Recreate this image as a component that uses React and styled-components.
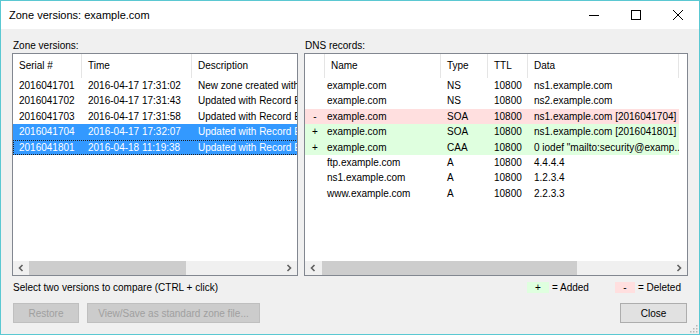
import styled, { createGlobalStyle } from "styled-components";

const GlobalStyle = createGlobalStyle`
  html, body {
    margin: 0;
    padding: 0;
    background: #f0f0f0;
  }
  body {
    font-family: "Liberation Sans", Arial, sans-serif;
    font-size: 10px;
    color: #000;
  }
`;

const Window = styled.div`
  position: relative;
  width: 700px;
  height: 335px;
  box-sizing: border-box;
  border: 1px solid #5bc8d2;
  background: #f0f0f0;
  display: flex;
  flex-direction: column;
`;

const TitleBar = styled.div`
  height: 28px;
  flex: none;
  background: #fff;
  display: flex;
  align-items: center;
`;

const Title = styled.div`
  flex: 1;
  padding-left: 8px;
  font-size: 11px;
`;

const CaptionButton = styled.div`
  width: 42px;
  height: 28px;
  display: flex;
  align-items: center;
  justify-content: center;
`;

const Content = styled.div`
  flex: 1;
  padding: 10px 11px 0 11px;
  display: flex;
  flex-direction: column;
`;

const Panels = styled.div`
  display: grid;
  grid-template-columns: 286px 384px;
  column-gap: 6px;
`;

const Panel = styled.div`
  display: flex;
  flex-direction: column;
`;

const Label = styled.div`
  height: 14px;
  line-height: 14px;
  padding-left: 1px;
`;

const ListBox = styled.div`
  height: 223px;
  box-sizing: border-box;
  border: 1px solid #828790;
  background: #fff;
  display: flex;
  flex-direction: column;
  overflow: hidden;
`;

const Header = styled.div`
  height: 24px;
  flex: none;
  display: flex;
  width: max-content;
`;

const HeaderCell = styled.div`
  width: ${(p) => p.$w}px;
  box-sizing: border-box;
  padding-left: ${(p) => p.$pad ?? 6}px;
  line-height: 24px;
  border-right: 1px solid #e5e5e5;
  white-space: nowrap;
  overflow: hidden;
`;

const Rows = styled.div`
  flex: 1;
  overflow: hidden;
`;

const Row = styled.div`
  display: flex;
  width: max-content;
  height: 15.4px;
  box-sizing: border-box;
  background: ${(p) => p.$bg || "transparent"};
  color: ${(p) => (p.$selected ? "#fff" : "#000")};
  outline: ${(p) => (p.$focus ? "1px dotted #222" : "none")};
  outline-offset: -1px;
`;

const Cell = styled.div`
  width: ${(p) => p.$w}px;
  box-sizing: border-box;
  padding-left: ${(p) => p.$pad ?? 6}px;
  text-align: ${(p) => p.$align || "left"};
  line-height: 15.4px;
  white-space: nowrap;
  overflow: hidden;
`;

const HScroll = styled.div`
  height: 14px;
  flex: none;
  display: flex;
  background: #f0f0f0;
`;

const ScrollArrow = styled.div`
  width: 16px;
  flex: none;
  display: flex;
  align-items: center;
  justify-content: center;
`;

const Track = styled.div`
  flex: 1;
  display: flex;
`;

const Thumb = styled.div`
  width: ${(p) => p.$w}px;
  margin-left: ${(p) => p.$left || 0}px;
  background: #cdcdcd;
`;

const StatusRow = styled.div`
  margin-top: 4px;
  height: 14px;
  display: flex;
  align-items: center;
  justify-content: space-between;
  padding-left: 1px;
`;

const Legend = styled.div`
  display: flex;
  align-items: center;
  padding-right: 7px;
`;

const Swatch = styled.div`
  width: ${(p) => p.$w}px;
  height: 11px;
  background: ${(p) => p.$bg};
  display: flex;
  align-items: center;
  justify-content: center;
  line-height: 11px;
`;

const LegendText = styled.span`
  margin-left: 3px;
  margin-right: ${(p) => p.$mr || 0}px;
`;

const ButtonRow = styled.div`
  margin-top: 9px;
  display: flex;
  align-items: center;
`;

const Button = styled.button`
  width: ${(p) => p.$w}px;
  height: 20px;
  margin-left: ${(p) => p.$ml || 0}px;
  padding: 0;
  box-sizing: border-box;
  font-family: "Liberation Sans", Arial, sans-serif;
  font-size: 10px;
  border: 1px solid ${(p) => (p.disabled ? "#bfbfbf" : "#adadad")};
  background: ${(p) => (p.disabled ? "#cccccc" : "#e1e1e1")};
  color: ${(p) => (p.disabled ? "#a0a0a0" : "#000")};
  &:last-child {
    margin-left: auto;
    margin-right: 1px;
  }
`;

const Grip = styled.svg`
  position: absolute;
  right: 1px;
  bottom: 1px;
`;

const Chevron = ({ dir }) => (
  <svg width="6" height="8" viewBox="0 0 6 8">
    <path
      d={dir === "left" ? "M4.5 1 L1.5 4 L4.5 7" : "M1.5 1 L4.5 4 L1.5 7"}
      fill="none"
      stroke="#606060"
      strokeWidth="1.6"
    />
  </svg>
);

const versions = [
  ["2016041701", "2016-04-17 17:31:02", "New zone created with Record Editor"],
  ["2016041702", "2016-04-17 17:31:43", "Updated with Record Editor"],
  ["2016041703", "2016-04-17 17:31:58", "Updated with Record Editor"],
  ["2016041704", "2016-04-17 17:32:07", "Updated with Record Editor", true],
  ["2016041801", "2016-04-18 11:19:38", "Updated with Record Editor", true, true],
];

const records = [
  ["", "example.com", "NS", "10800", "ns1.example.com"],
  ["", "example.com", "NS", "10800", "ns2.example.com"],
  ["-", "example.com", "SOA", "10800", "ns1.example.com [2016041704]"],
  ["+", "example.com", "SOA", "10800", "ns1.example.com [2016041801]"],
  ["+", "example.com", "CAA", "10800", "0 iodef \"mailto:security@examp..."],
  ["", "ftp.example.com", "A", "10800", "4.4.4.4"],
  ["", "ns1.example.com", "A", "10800", "1.2.3.4"],
  ["", "www.example.com", "A", "10800", "2.2.3.3"],
];

const ADDED = "#dfffdf";
const DELETED = "#ffdfdf";

const App = () => {
  return (
    <>
      <GlobalStyle />
      <Window>
        <TitleBar>
          <Title>Zone versions: example.com</Title>
          <CaptionButton>
            <svg width="10" height="10" viewBox="0 0 10 10">
              <path d="M0 5.5 H10" stroke="#000" strokeWidth="1" />
            </svg>
          </CaptionButton>
          <CaptionButton>
            <svg width="10" height="10" viewBox="0 0 10 10">
              <rect x="0.5" y="0.5" width="9" height="9" fill="none" stroke="#000" strokeWidth="1" />
            </svg>
          </CaptionButton>
          <CaptionButton>
            <svg width="10" height="10" viewBox="0 0 10 10">
              <path d="M0 0 L10 10 M10 0 L0 10" stroke="#000" strokeWidth="1" />
            </svg>
          </CaptionButton>
        </TitleBar>

        <Content>
          <Panels>
            <Panel>
              <Label>Zone versions:</Label>
              <ListBox>
                <Header>
                  <HeaderCell $w={69}>Serial #</HeaderCell>
                  <HeaderCell $w={110}>Time</HeaderCell>
                  <HeaderCell $w={160}>Description</HeaderCell>
                </Header>
                <Rows>
                  {versions.map(([serial, time, desc, sel, focus]) => (
                    <Row key={serial} $bg={sel ? "#3399ff" : null} $selected={sel} $focus={focus}>
                      <Cell $w={69}>{serial}</Cell>
                      <Cell $w={110}>{time}</Cell>
                      <Cell $w={160}>{desc}</Cell>
                    </Row>
                  ))}
                </Rows>
                <HScroll>
                  <ScrollArrow><Chevron dir="left" /></ScrollArrow>
                  <Track><Thumb $w={157} /></Track>
                  <ScrollArrow><Chevron dir="right" /></ScrollArrow>
                </HScroll>
              </ListBox>
            </Panel>

            <Panel>
              <Label>DNS records:</Label>
              <ListBox>
                <Header>
                  <HeaderCell $w={20} />
                  <HeaderCell $w={116}>Name</HeaderCell>
                  <HeaderCell $w={47}>Type</HeaderCell>
                  <HeaderCell $w={40}>TTL</HeaderCell>
                  <HeaderCell $w={151}>Data</HeaderCell>
                </Header>
                <Rows>
                  {records.map(([mark, name, type, ttl, data], i) => (
                    <Row key={i} $bg={mark === "+" ? ADDED : mark === "-" ? DELETED : null}>
                      <Cell $w={20} $pad={0} $align="center">{mark}</Cell>
                      <Cell $w={116} $pad={2}>{name}</Cell>
                      <Cell $w={47}>{type}</Cell>
                      <Cell $w={40}>{ttl}</Cell>
                      <Cell $w={151}>{data}</Cell>
                    </Row>
                  ))}
                </Rows>
                <HScroll>
                  <ScrollArrow><Chevron dir="left" /></ScrollArrow>
                  <Track><Thumb $w={255} $left={1} /></Track>
                  <ScrollArrow><Chevron dir="right" /></ScrollArrow>
                </HScroll>
              </ListBox>
            </Panel>
          </Panels>

          <StatusRow>
            <span>Select two versions to compare (CTRL + click)</span>
            <Legend>
              <Swatch $w={22} $bg={ADDED}>+</Swatch>
              <LegendText $mr={26}>= Added</LegendText>
              <Swatch $w={20} $bg={DELETED}>-</Swatch>
              <LegendText>= Deleted</LegendText>
            </Legend>
          </StatusRow>

          <ButtonRow>
            <Button $w={66} $ml={1} disabled>Restore</Button>
            <Button $w={173} $ml={8} disabled>View/Save as standard zone file...</Button>
            <Button $w={67}>Close</Button>
          </ButtonRow>
        </Content>

        <Grip width="9" height="9" viewBox="0 0 9 9">
          {[[7, 1], [4, 4], [7, 4], [1, 7], [4, 7], [7, 7]].map(([x, y]) => (
            <rect key={`${x}-${y}`} x={x} y={y} width="1.5" height="1.5" fill="#b8b8b8" />
          ))}
        </Grip>
      </Window>
    </>
  );
};

export default App;
